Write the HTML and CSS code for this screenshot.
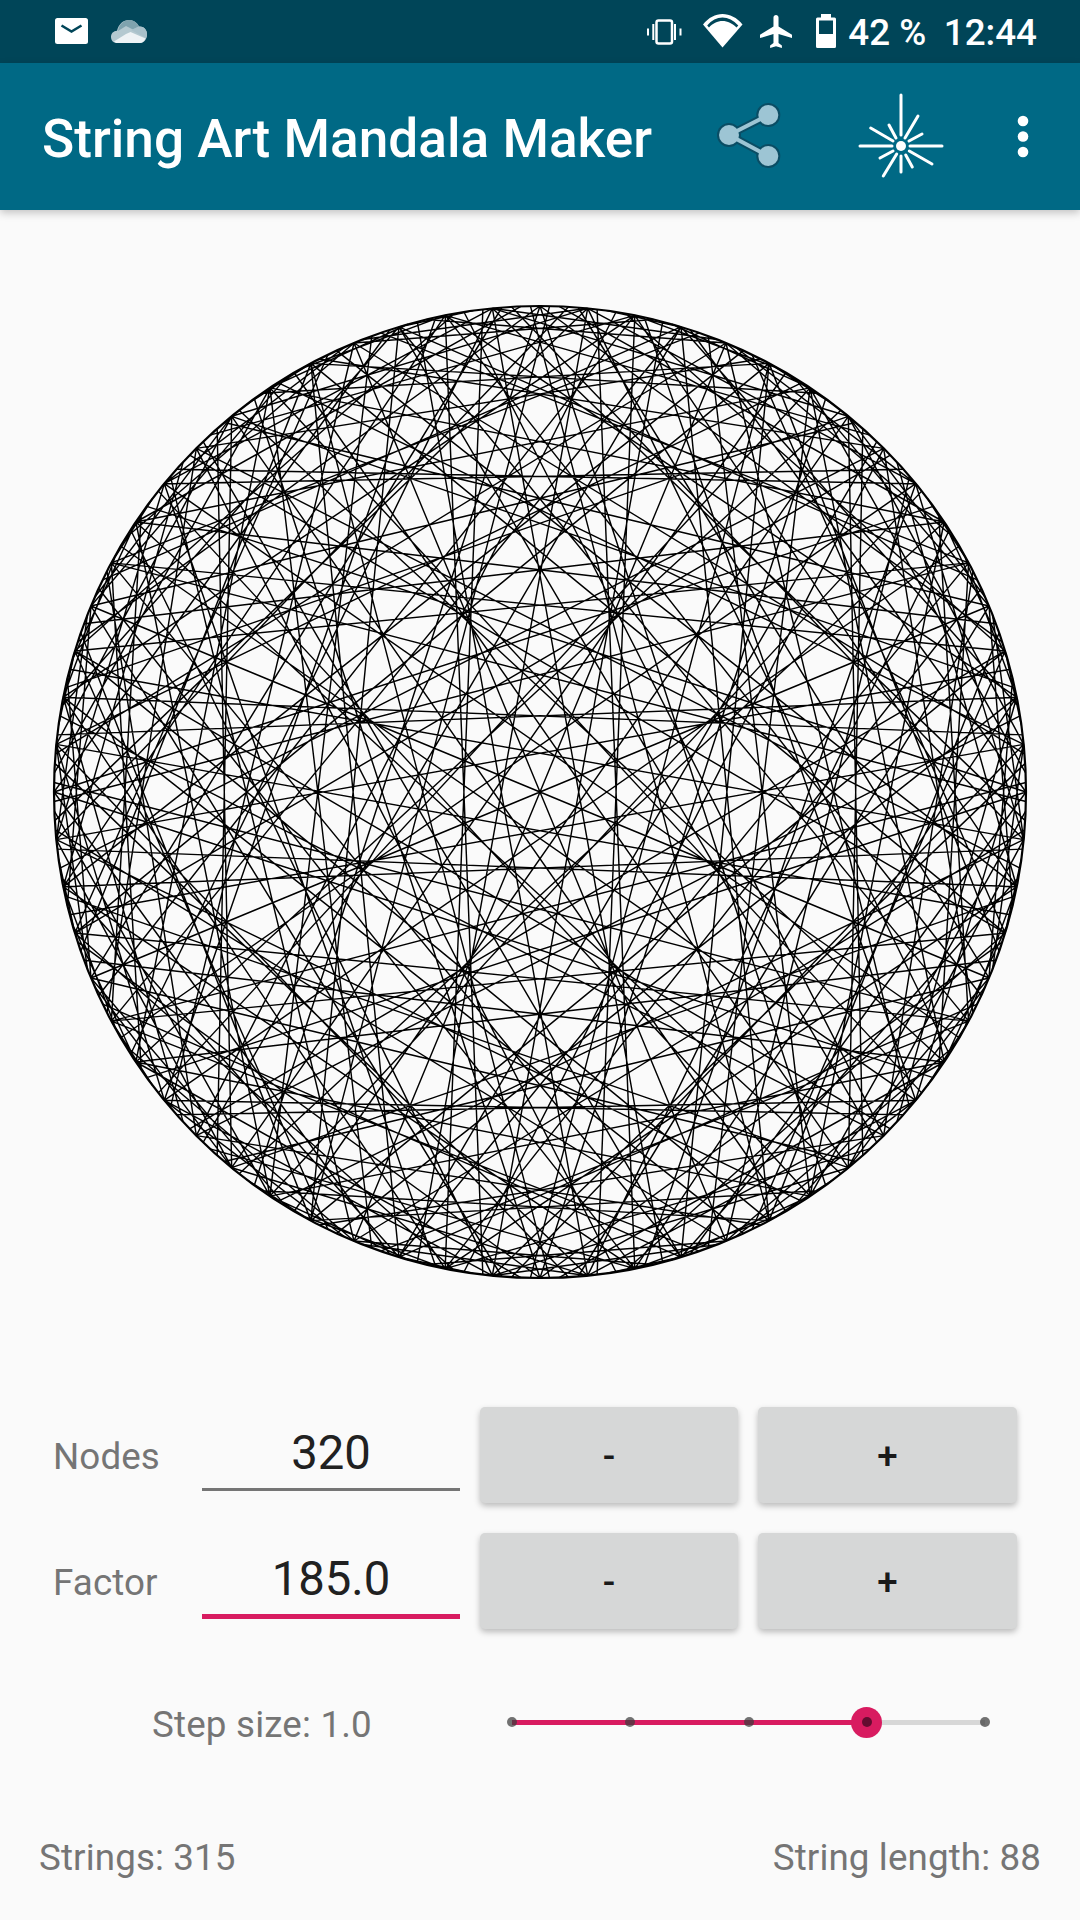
FILE: index.html
```html
<!DOCTYPE html>
<html lang="en">
<head>
<meta charset="utf-8">
<title>String Art Mandala Maker</title>
<link rel="stylesheet" href="styles.css">
</head>
<body>
<div class="screen">
  <header class="status">
    <div class="status-left">
      <svg class="ic-mail" viewBox="0 0 33 26"><rect width="33" height="26" rx="2.5" fill="#fff"/><path d="M6.5 7.5 16.5 13.5 26.5 7.5" fill="none" stroke="#004558" stroke-width="2.6"/></svg>
      <svg class="ic-cloud" viewBox="0 0 36 23"><path d="M6 23C2 23 0 20 0 17c0-3.500 2.500-6 6-6.200C7.500 4 12.500 0 18 0c4.500 0 8 2.500 10 6.500 4.800-.3 8 3 8 8 0 5-3.500 8.500-7 8.500z" fill="#b4c9d0"/><path d="M7 11C8 4 13 0 18 0c4.500 0 8 2.500 10 6.500l-6 3-7-3.500z" fill="#7fa3ae"/><path d="M20 10l8-3.500c4.800-.3 8 3 8 8 0 1.500-.5 2.500-1 3.500z" fill="#a9c1ca"/><path d="M3 21.500 15 14l4.500-2 15 6.500C33.500 21 31 23 29 23H6c-1.300 0-2.300-.6-3-1.500z" fill="#eef3f5"/></svg>
    </div>
    <div class="status-right">
      <svg class="ic-vib" viewBox="0 0 37 26"><rect x="10.500" y="1.500" width="15.500" height="23" rx="2" fill="none" stroke="#fff" stroke-width="2.500"/><path d="M6.300 5h2v16h-2zM1 9.500h2v7H1zM28 5h2v16h-2zM33.500 9.500h2v7h-2z" fill="#fff"/></svg>
      <svg class="ic-wifi" viewBox="0 0 40 34"><path d="M0 10.500C5.500 3.500 12.500 0 19.500 0S34 3.500 39.500 10.500L19.500 33.500z" fill="#fff"/><path d="M4.200 11.500C8.500 6.300 14 3.500 19.500 3.500s11 2.800 15.800 8l-1.800 2C29.500 9.500 24.500 7 19.500 7s-10 2.500-13.500 6.500z" fill="#004558"/></svg>
      <svg class="ic-plane" viewBox="2 2 19 20" preserveAspectRatio="none"><path d="M21 16v-2l-8-5V3.500c0-.83-.67-1.500-1.500-1.500S10 2.670 10 3.500V9l-8 5v2l8-2.500V19l-2 1.500V22l3.500-1 3.500 1v-1.500L13 19v-5.500l8 2.500z" fill="#fff"/></svg>
      <svg class="ic-batt" viewBox="0 0 20 34"><path d="M5 0h10v3.500h3.500A1.500 1.500 0 0 1 20 5v27.500a1.500 1.500 0 0 1-1.500 1.500h-17A1.500 1.500 0 0 1 0 32.500V5a1.500 1.500 0 0 1 1.500-1.500H5z" fill="#fff"/><rect x="3" y="6.500" width="14" height="13.500" fill="#004558"/></svg>
      <span class="batt-text">42 %</span>
      <span class="clock">12:44</span>
    </div>
  </header>

  <nav class="appbar">
    <h1 class="title">String Art Mandala Maker</h1>
    <svg class="ic-share" viewBox="0 0 90 90">
      <path class="share-halo" d="M68.300 25 29 45 68.300 66"/>
      <circle class="share-halo-dot" cx="68.300" cy="25" r="12"/>
      <circle class="share-halo-dot" cx="29" cy="45" r="12"/>
      <circle class="share-halo-dot" cx="68.300" cy="66" r="12"/>
      <path class="share-line" d="M68.300 25 29 45 68.300 66"/>
      <circle class="share-dot" cx="68.300" cy="25" r="10"/>
      <circle class="share-dot" cx="29" cy="45" r="10"/>
      <circle class="share-dot" cx="68.300" cy="66" r="10"/>
    </svg>
    <svg class="ic-spark" viewBox="0 0 100 100">
      <g class="spark-rays">
        <path d="M51 10V50M10 61H42M60 61H92M51 71V87M68 31 55 53M72 49 59 56M39 40 46 53M20.700 43 43 56M30 73 43 66M33.300 91 46.700 69M62.300 82 55.700 70M82 79 59.300 66"/>
      </g>
      <circle cx="51" cy="61" r="5" fill="#fff"/>
    </svg>
    <svg class="ic-more" viewBox="0 0 12 44"><circle cx="6" cy="6" r="5.300"/><circle cx="6" cy="21.500" r="5.300"/><circle cx="6" cy="37" r="5.300"/></svg>
  </nav>

  <main class="stage">
    <canvas id="mandala" class="mandala" width="1000" height="1000"></canvas>
  </main>

  <section class="controls">
    <div class="row">
      <span class="label">Nodes</span>
      <div class="field">320</div>
      <button class="btn">-</button>
      <button class="btn">+</button>
    </div>
    <div class="row">
      <span class="label">Factor</span>
      <div class="field field-focus">185.0</div>
      <button class="btn">-</button>
      <button class="btn">+</button>
    </div>
  </section>

  <section class="step">
    <span class="step-label">Step size: 1.0</span>
    <div class="slider">
      <div class="track"></div>
      <div class="track-on"></div>
      <div class="thumb"></div>
      <div class="ticks">
        <i class="tick"></i><i class="tick"></i><i class="tick"></i>
        <i class="tick tick-current"></i><i class="tick"></i>
      </div>
    </div>
  </section>

  <footer class="stats">
    <span>Strings: 315</span>
    <span>String length: 88</span>
  </footer>
</div>
<script src="app.js"></script>
</body>
</html>
```

FILE: styles.css
```css
* { box-sizing: border-box; }
html, body { margin: 0; padding: 0; }
body { background: #fafafa; font-family: Roboto, "Noto Sans", sans-serif; color: #212121; }
.screen { width: 1080px; height: 1920px; display: flex; flex-direction: column; overflow: hidden; }

.status { height: 63px; background: #004558; display: flex; justify-content: space-between; padding: 0 43px 0 55px; flex: none; }
.status-left, .status-right { display: flex; align-items: flex-start; }
.ic-mail { width: 33px; height: 26px; margin-top: 18px; }
.ic-cloud { width: 36px; height: 23px; margin: 20px 0 0 23px; }
.ic-vib { width: 37px; height: 26px; margin-top: 19px; }
.ic-wifi { width: 40px; height: 34px; margin: 14px 0 0 20px; }
.ic-plane { width: 32px; height: 33px; margin: 15px 0 0 17px; }
.ic-batt { width: 20px; height: 34px; margin: 14px 0 0 24px; }
.batt-text, .clock { color: #fff; font-size: 36.75px; font-weight: 500; line-height: 65px; height: 63px; }
.batt-text { margin-left: 12px; }
.clock { margin-left: 17.500px; }

.appbar { height: 147px; flex: none; background: #006985; display: flex; position: relative; box-shadow: 0 3px 8px rgba(0,0,0,.22); z-index: 1; }
.title { margin: 0 0 0 42px; color: #fff; font-size: 53.2px; font-weight: 500; line-height: 152px; height: 147px; width: 658px; white-space: nowrap; }
.ic-share { width: 90px; height: 90px; margin-top: 27px; flex: none; }
.share-halo { fill: none; stroke: #0a4d64; stroke-width: 8; }
.share-halo-dot { fill: #0a4d64; }
.share-line { fill: none; stroke: #9dc5d4; stroke-width: 4; }
.share-dot { fill: #9dc5d4; }
.ic-spark { width: 100px; height: 100px; margin: 22px 0 0 60px; flex: none; }
.spark-rays path { fill: none; stroke: #fff; stroke-width: 3; stroke-linecap: round; }
.ic-more { width: 12px; height: 44px; margin: 52px 0 0 67px; flex: none; fill: #fff; }

.stage { display: flex; justify-content: center; height: 1197px; padding-top: 82px; flex: none; }
.mandala { width: 1000px; height: 1000px; display: block; }

.controls { display: flex; flex-direction: column; gap: 30px; padding-left: 53px; flex: none; }
.row { display: grid; grid-template-columns: 129px 258px 258px 259px; column-gap: 20px; height: 96px; align-items: start; }
.label { font-size: 36.75px; letter-spacing: .1px; color: #757575; line-height: 100px; }
.field { height: 84px; border-bottom: 3px solid #757575; text-align: center; font-size: 47.25px; line-height: 92px; color: #212121; }
.field-focus { height: 86px; border-bottom: 5px solid #d81b60; line-height: 92px; }
.btn { height: 96px; border: 0; border-radius: 5px; background: #d6d7d7; color: #1a1a1a; font: 500 36.75px Roboto, sans-serif; padding: 2px 0 0; margin: 0; box-shadow: 0 3px 6px rgba(0,0,0,.26); }

.step { display: flex; align-items: center; height: 62px; margin-top: 62px; padding-left: 152px; flex: none; }
.step-label { width: 355px; font-size: 36.75px; letter-spacing: .18px; color: #757575; line-height: 67px; height: 62px; }
.slider { position: relative; width: 483px; height: 32px; flex: none; }
.track { position: absolute; left: 5px; right: 5px; top: 13.500px; height: 5px; background: #d7d7d7; }
.track-on { position: absolute; left: 5px; width: 354px; top: 13.500px; height: 5px; background: #d81b60; }
.thumb { position: absolute; left: 344px; top: .5px; width: 31px; height: 31px; border-radius: 50%; background: #d81b60; }
.ticks { position: absolute; inset: 0; display: flex; justify-content: space-between; align-items: center; }
.tick { width: 10px; height: 10px; border-radius: 50%; background: rgba(60,60,60,.72); }
.tick-current { background: #640c30; }

.stats { display: flex; justify-content: space-between; padding: 0 39px 0 39px; margin-top: 74px; font-size: 36.75px; letter-spacing: .12px; color: #757575; line-height: 62px; flex: none; }
```

FILE: app.js
```js
(function () {
  var nodes = 320, factor = 185;
  var canvas = document.getElementById('mandala');
  var ctx = canvas.getContext('2d');
  var cx = 500, cy = 500, r = 486;
  function pt(i) {
    var a = (i / nodes) * Math.PI * 2;
    return [cx + r * Math.cos(a), cy + r * Math.sin(a)];
  }
  ctx.strokeStyle = '#000';
  ctx.lineWidth = 1.45;
  ctx.beginPath();
  for (var i = 0; i < nodes; i++) {
    var p = pt(i), q = pt((i * factor) % nodes);
    ctx.moveTo(p[0], p[1]);
    ctx.lineTo(q[0], q[1]);
  }
  ctx.stroke();
  ctx.lineWidth = 2.2;
  ctx.beginPath();
  ctx.arc(cx, cy, r, 0, Math.PI * 2);
  ctx.stroke();
})();
```
